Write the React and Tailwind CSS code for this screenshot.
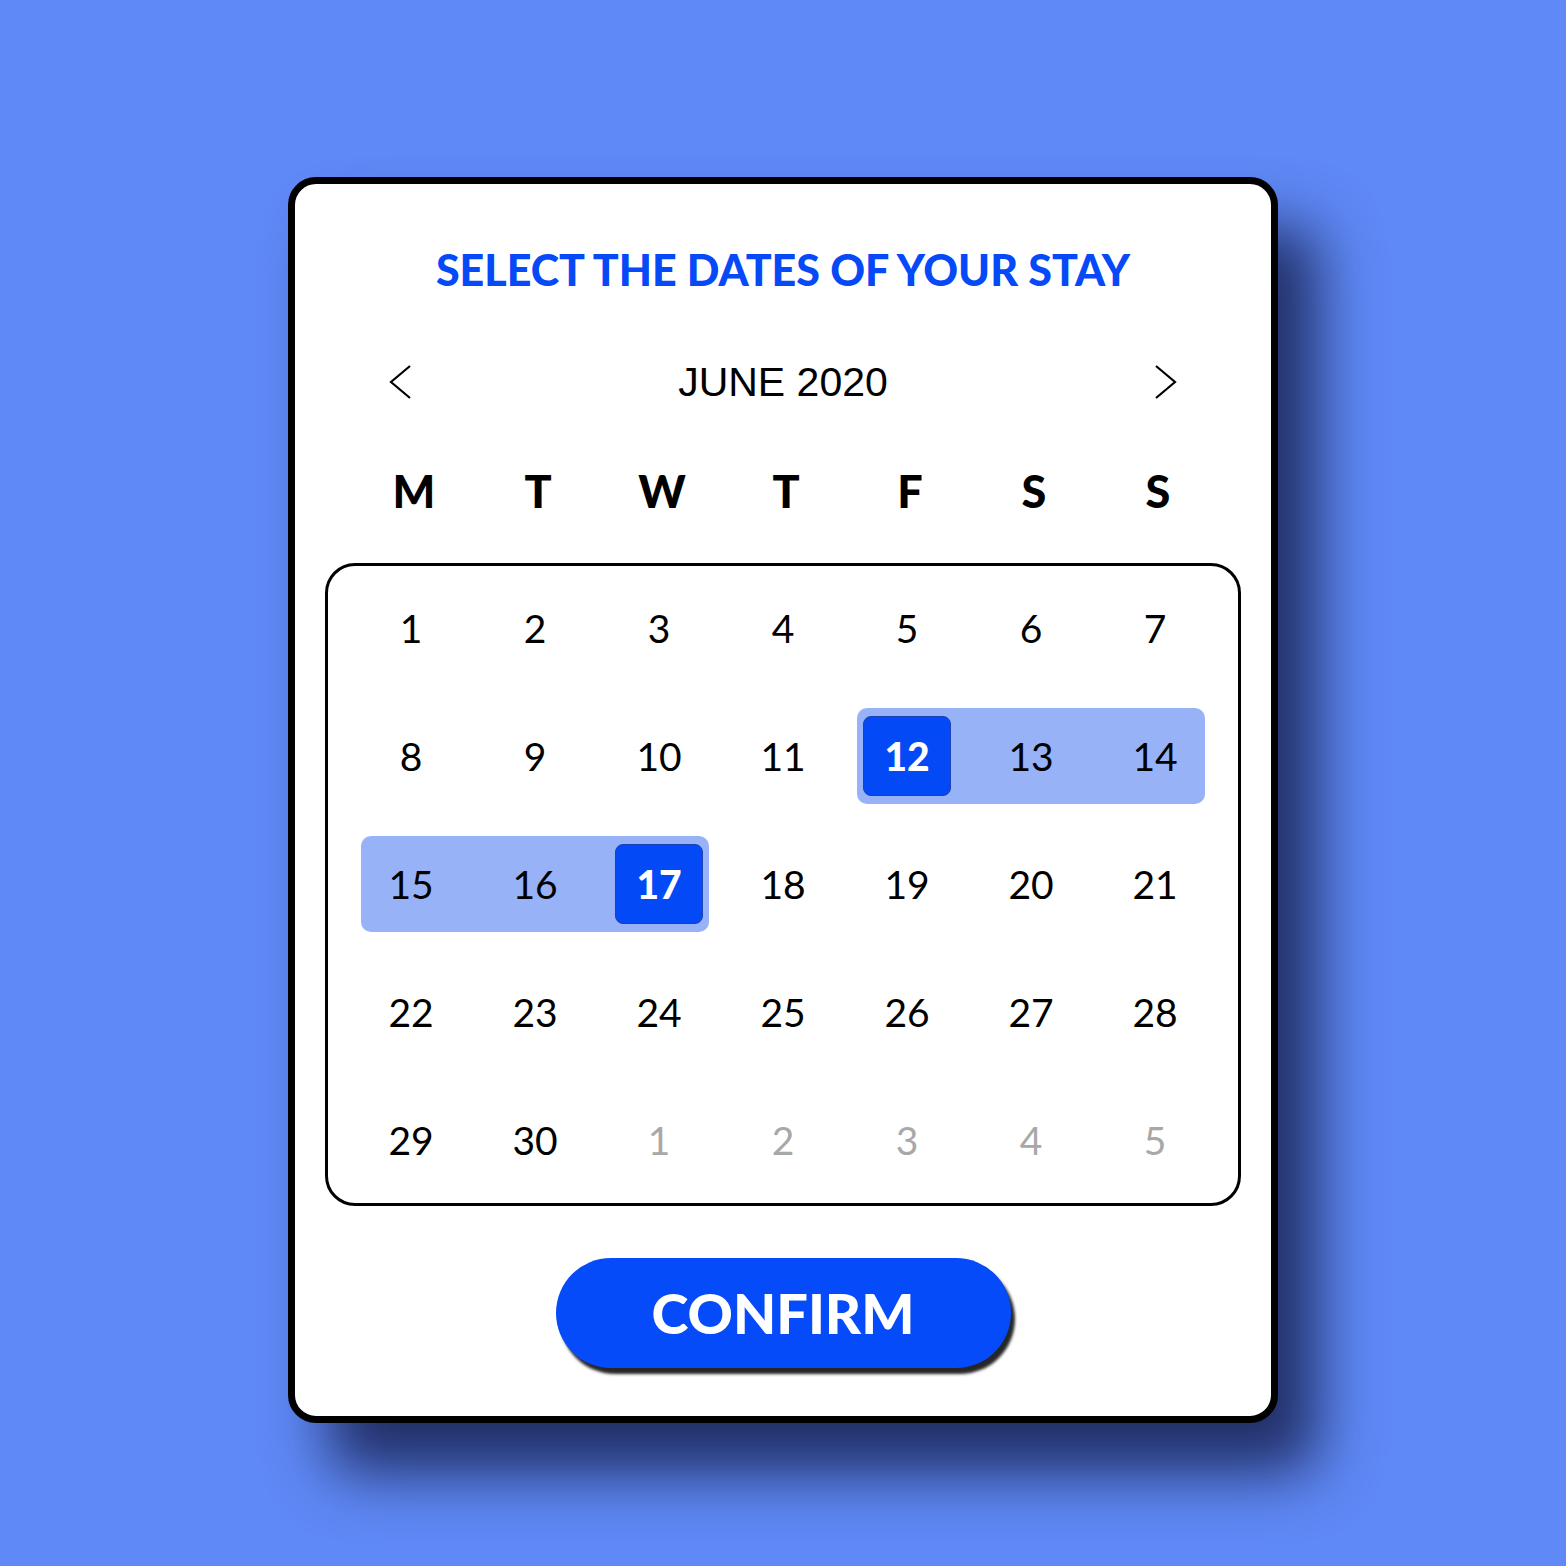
import React from "react";

const WEEKDAYS = ["M", "T", "W", "T", "F", "S", "S"];

// weeks of June 2020, trailing days belong to July
const WEEKS = [
  [1, 2, 3, 4, 5, 6, 7],
  [8, 9, 10, 11, 12, 13, 14],
  [15, 16, 17, 18, 19, 20, 21],
  [22, 23, 24, 25, 26, 27, 28],
  [29, 30, "1", "2", "3", "4", "5"],
];

const START = 12;
const END = 17;

function Chevron({ dir }) {
  return (
    <svg width="24" height="34" viewBox="0 0 24 34" fill="none">
      <polyline
        points={dir === "left" ? "21,1 2,17 21,33" : "3,1 22,17 3,33"}
        stroke="#000"
        strokeWidth="2.2"
      />
    </svg>
  );
}

function Day({ value }) {
  const muted = typeof value === "string";
  const picked = !muted && (value === START || value === END);

  if (picked) {
    return (
      <div className="w-[100px] h-[96px] flex items-center justify-center">
        <div className="w-[88px] h-[80px] rounded-[8px] bg-[#0449f6] border border-[#1d3fb8] flex items-center justify-center text-white font-black text-[39px] leading-none">
          {value}
        </div>
      </div>
    );
  }

  return (
    <div
      className={
        "w-[100px] h-[96px] flex items-center justify-center text-[39px] leading-none " +
        (muted ? "text-[#a8a8a8]" : "text-black")
      }
    >
      {value}
    </div>
  );
}

function Week({ days }) {
  const inRange = (d) => typeof d === "number" && d >= START && d <= END;
  const first = days.findIndex(inRange);

  if (first === -1) {
    return (
      <div className="flex gap-6">
        {days.map((d, i) => (
          <Day key={i} value={d} />
        ))}
      </div>
    );
  }

  let last = first;
  while (last + 1 < days.length && inRange(days[last + 1])) last++;

  return (
    <div className="flex gap-6">
      {days.slice(0, first).map((d, i) => (
        <Day key={"a" + i} value={d} />
      ))}
      <div className="flex gap-6 bg-[#97b2f6] rounded-[10px]">
        {days.slice(first, last + 1).map((d, i) => (
          <Day key={"r" + i} value={d} />
        ))}
      </div>
      {days.slice(last + 1).map((d, i) => (
        <Day key={"b" + i} value={d} />
      ))}
    </div>
  );
}

export default function App() {
  return (
    <div className="min-h-screen w-full bg-[#5f89f6] flex justify-center pt-[177px] pb-[143px] font-['Lato',sans-serif]">
      <div className="w-[990px] h-[1246px] bg-white border-[7px] border-black rounded-[28px] px-[30px] shadow-[40px_50px_60px_rgba(22,32,78,0.85)] flex flex-col">
        <h1 className="mt-[64px] text-center text-[#0549f7] font-black text-[43px] leading-none">
          SELECT THE DATES OF YOUR STAY
        </h1>

        <div className="mt-[67px] h-[48px] px-[64px] flex items-center justify-between">
          <Chevron dir="left" />
          <span className="font-['Liberation_Sans',Arial,sans-serif] text-[41px] leading-none text-black">
            JUNE 2020
          </span>
          <Chevron dir="right" />
        </div>

        <div className="mt-[63px] flex gap-6 pl-[39px]">
          {WEEKDAYS.map((d, i) => (
            <div
              key={i}
              className="w-[100px] text-center font-black text-[45px] leading-none text-black"
            >
              {d}
            </div>
          ))}
        </div>

        <div className="mt-[49px] border-[3px] border-black rounded-[30px] pt-[14px] pb-[15px] flex flex-col items-center gap-8">
          {WEEKS.map((w, i) => (
            <Week key={i} days={w} />
          ))}
        </div>

        <div className="mt-[52px] flex justify-center">
          <button className="w-[455px] h-[110px] rounded-full bg-[#054bf9] text-white font-black text-[56px] leading-none shadow-[4px_6px_3px_rgba(0,0,0,0.85)]">
            CONFIRM
          </button>
        </div>
      </div>
    </div>
  );
}
